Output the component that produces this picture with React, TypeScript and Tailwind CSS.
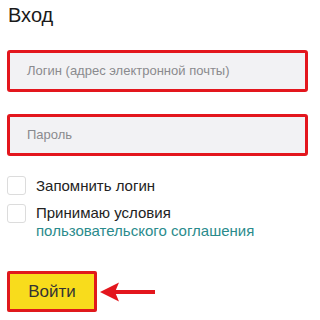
const font = { fontFamily: '"Liberation Sans", Arial, sans-serif' };

const Field = ({ placeholder, className }: { placeholder: string; className?: string }) => (
  <div
    className={`flex items-center h-[42px] w-[301px] rounded-[3px] border-[3px] border-[#e3161d] bg-[#f2f2f4] pl-[17px] text-[13px] text-[#8a8a8e] ${className ?? ''}`}
  >
    {placeholder}
  </div>
);

const Box = () => (
  <span className="block w-[19px] h-[19px] shrink-0 rounded-[3px] border border-[#dcdcdc] bg-white" />
);

export default function App() {
  return (
    <div className="w-[318px] h-[320px] overflow-hidden bg-white pt-[3px] pl-[7px]" style={font}>
      <h1 className="ml-[1px] text-[20px] leading-[24px] text-[#1a1a1a]">Вход</h1>

      <Field placeholder="Логин (адрес электронной почты)" className="mt-[23px] h-[41px]" />
      <Field placeholder="Пароль" className="mt-[22px]" />

      <label className="mt-[20px] flex items-center gap-[10px]">
        <Box />
        <span className="text-[15px] leading-[18px] text-[#222]">Запомнить логин</span>
      </label>

      <label className="mt-[9px] flex items-start gap-[10px]">
        <Box />
        <span className="text-[15px] leading-[18px] text-[#222]">
          Принимаю условия
          <br />
          <span className="text-[#2a8b8c]">пользовательского соглашения</span>
        </span>
      </label>

      <div className="mt-[31px] flex items-center">
        <button className="h-[41px] w-[90px] rounded-[2px] border-[3px] border-[#e0191c] bg-[#f8dc1c] text-[17px] text-[#333]">
          Войти
        </button>
        <svg width="60" height="20" viewBox="0 0 60 20" className="ml-[2px]">
          <path d="M15 8 H56 V12 H15 Z" fill="#e3161d" />
          <path d="M1 10 L20 0.5 L16 10 L20 19.5 Z" fill="#e3161d" />
        </svg>
      </div>
    </div>
  );
}
